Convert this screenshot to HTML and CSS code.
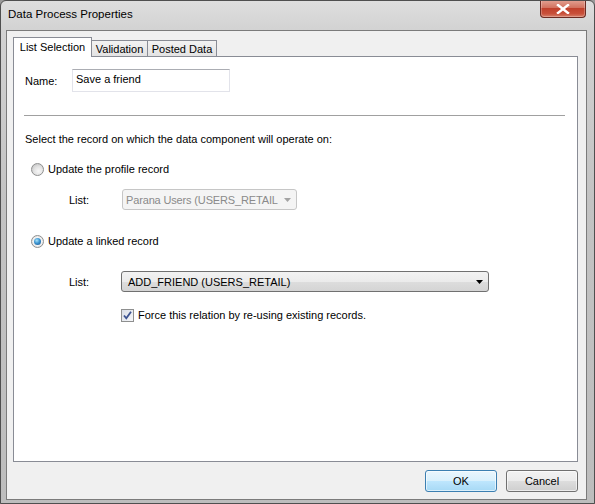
FILE: index.html
```html
<!DOCTYPE html>
<html>
<head>
<meta charset="utf-8">
<link rel="stylesheet" href="styles.css">
</head>
<body>
<div class="window">
  <div class="titlebar">
    <span class="title">Data Process Properties</span>
    <div class="close">
      <svg width="14" height="10" viewBox="0 0 14 10"><path d="M2 1 L12 9 M12 1 L2 9" stroke="#fff" stroke-width="2.4" stroke-linecap="square"/></svg>
    </div>
  </div>
  <div class="client">
    <div class="tabs">
      <div class="tab selected">List Selection</div>
      <div class="tab t-valid">Validation</div>
      <div class="tab t-posted">Posted Data</div>
    </div>
    <div class="panel">
      <div class="row name-row">
        <span class="name-label">Name:</span>
        <div class="textbox">Save a friend</div>
      </div>
      <div class="sep"></div>
      <div class="row text-row">Select the record on which the data component will operate on:</div>
      <div class="row radio-row r1">
        <span class="radio"></span>
        <span>Update the profile record</span>
      </div>
      <div class="row list-row l1">
        <span class="list-label">List:</span>
        <div class="combo disabled">
          <span class="combo-text">Parana Users (USERS_RETAIL</span>
          <svg class="arrow" width="7" height="4" viewBox="0 0 7 4"><path d="M0 0 H7 L3.5 4 Z" fill="#a3a3a3"/></svg>
        </div>
      </div>
      <div class="row radio-row r2">
        <span class="radio checked"><span class="dot"></span></span>
        <span>Update a linked record</span>
      </div>
      <div class="row list-row l2">
        <span class="list-label">List:</span>
        <div class="combo active">
          <span class="combo-text">ADD_FRIEND (USERS_RETAIL)</span>
          <svg class="arrow" width="7" height="4" viewBox="0 0 7 4"><path d="M0 0 H7 L3.5 4 Z" fill="#000"/></svg>
        </div>
      </div>
      <div class="row check-row">
        <span class="checkbox">
          <svg width="11" height="11" viewBox="0 0 11 11"><path d="M2 5.5 L4.3 8.3 L9 1.8" fill="none" stroke="#3c5391" stroke-width="1.8"/></svg>
        </span>
        <span>Force this relation by re-using existing records.</span>
      </div>
    </div>
    <div class="buttons">
      <div class="btn ok">OK</div>
      <div class="btn">Cancel</div>
    </div>
  </div>
</div>
</body>
</html>
```

FILE: styles.css
```css
html, body {
  margin: 0;
  padding: 0;
  background: #9a9a9a;
}
.window {
  width: 595px;
  height: 504px;
  box-sizing: border-box;
  display: flex;
  flex-direction: column;
  background: linear-gradient(to bottom, #dedede 0px, #d2d2d2 30px, #c3c3c3 200px, #bdbdbd 504px);
  border: 1px solid #4f4f4f;
  border-radius: 6px 6px 0 0;
  font-family: "Liberation Sans", Arial, sans-serif;
  font-size: 11px;
  color: #000;
  overflow: hidden;
}
.titlebar {
  height: 29px;
  display: flex;
  justify-content: space-between;
  align-items: flex-start;
  flex: none;
}
.title {
  font-size: 11.5px;
  padding: 6px 0 0 7px;
  line-height: 14px;
  color: #000;
}
.close {
  width: 46px;
  height: 18px;
  margin-right: 8px;
  margin-top: -1px;
  box-sizing: border-box;
  border: 1px solid #6b2b22;
  border-top: none;
  border-radius: 0 0 4px 4px;
  background: linear-gradient(to bottom, #e3a394 0%, #d2725f 45%, #c0412c 50%, #c8503a 80%, #d7806a 100%);
  display: flex;
  align-items: center;
  justify-content: center;
  box-shadow: inset 0 0 0 1px rgba(255,255,255,0.25);
}
.client {
  flex: none;
  margin: 0 7px 0 5px;
  height: 470px;
  box-sizing: border-box;
  border: 1px solid #7b7b7b;
  background: #f0f0f0;
  padding: 6px 8px 0 6px;
  display: flex;
  flex-direction: column;
}
.tabs {
  display: flex;
  align-items: flex-end;
  height: 20px;
  margin-bottom: -1px;
  position: relative;
  z-index: 1;
}
.tab {
  box-sizing: border-box;
  border: 1px solid #898c95;
  border-bottom: none;
  height: 16px;
  margin-bottom: 1px;
  background: linear-gradient(to bottom, #f2f2f2, #e3e3e3);
  display: flex;
  align-items: center;
  justify-content: center;
  padding-top: 1px;
  line-height: 13px;
}
.tab.selected {
  width: 79px;
  height: 20px;
  margin-bottom: 0;
  background: #fff;
  padding-top: 0;
  padding-bottom: 1px;
}
.t-valid {
  width: 56px;
  border-left: none;
}
.t-posted {
  width: 69px;
  border-left: none;
}
.panel {
  box-sizing: border-box;
  height: 406px;
  border: 1px solid #898c95;
  background: #fff;
  padding: 0 11px;
  display: flex;
  flex-direction: column;
}
.row {
  display: flex;
  align-items: center;
}
.name-row {
  margin-top: 12px;
  height: 23px;
}
.name-label {
  width: 47px;
}
.textbox {
  width: 158px;
  height: 23px;
  box-sizing: border-box;
  border: 1px solid #e2e3ea;
  border-top-color: #abadb3;
  padding: 0 0 4px 3px;
  display: flex;
  align-items: center;
}
.sep {
  margin-top: 23px;
  height: 1px;
  background: #a0a0a0;
  margin-left: -1px;
  margin-right: 1px;
}
.text-row {
  margin-top: 14px;
  height: 18px;
}
.radio-row {
  height: 18px;
  padding-left: 6px;
  gap: 4px;
}
.r1 { margin-top: 12px; }
.r2 { margin-top: 22px; }
.radio {
  width: 13px;
  height: 13px;
  box-sizing: border-box;
  border-radius: 50%;
  border: 1px solid #8e8f8f;
  background: radial-gradient(circle at 60% 65%, #f7f7f7 0%, #e3e3e3 45%, #c9c9c9 80%);
  display: flex;
  align-items: center;
  justify-content: center;
}
.radio.checked {
  background: radial-gradient(circle, #f4f4f4 50%, #d6d6d6 100%);
}
.dot {
  width: 7px;
  height: 7px;
  border-radius: 50%;
  background: radial-gradient(circle at 40% 35%, #a9e4fb 0%, #3d95d1 45%, #184f8a 100%);
}
.list-row {
  height: 21px;
  padding-left: 44px;
}
.l1 { margin-top: 11px; }
.l2 { margin-top: 21px; }
.list-label {
  width: 52px;
}
.combo {
  height: 21px;
  box-sizing: border-box;
  display: flex;
  align-items: center;
  justify-content: space-between;
  border-radius: 3px;
}
.combo.disabled {
  width: 175px;
  margin-left: 1px;
  border: 1px solid #c6c6c6;
  background: #f4f4f4;
  color: #8a8a8a;
  padding: 0 5px 0 3px;
  gap: 3px;
  letter-spacing: -0.15px;
}
.combo.active {
  width: 368px;
  border: 1px solid #707070;
  background: linear-gradient(to bottom, #f2f2f2 0%, #ebebeb 50%, #dddddd 51%, #d4d4d4 100%);
  padding: 0 5px 0 6px;
}
.combo-text {
  white-space: nowrap;
}
.arrow {
  flex: none;
}
.check-row {
  margin-top: 14px;
  height: 18px;
  padding-left: 96px;
  gap: 4px;
}
.checkbox {
  width: 13px;
  height: 13px;
  box-sizing: border-box;
  border: 1px solid #8e8f8f;
  background: linear-gradient(135deg, #d8dde6, #f6f7f9);
  display: flex;
  align-items: center;
  justify-content: center;
}
.buttons {
  display: flex;
  justify-content: flex-end;
  gap: 9px;
  margin-top: 8px;
  margin-right: 0;
}
.btn {
  width: 72px;
  height: 22px;
  box-sizing: border-box;
  border: 1px solid #707070;
  border-radius: 3px;
  background: linear-gradient(to bottom, #f2f2f2 0%, #ebebeb 50%, #dddddd 51%, #cfcfcf 100%);
  display: flex;
  align-items: center;
  justify-content: center;
  box-shadow: inset 0 0 0 1px rgba(255,255,255,0.6);
}
.btn.ok {
  border-color: #3c7fb1;
  background: linear-gradient(to bottom, #eaf6fd 0%, #d9f0fc 50%, #bee6fd 51%, #a7d9f5 100%);
}
```
